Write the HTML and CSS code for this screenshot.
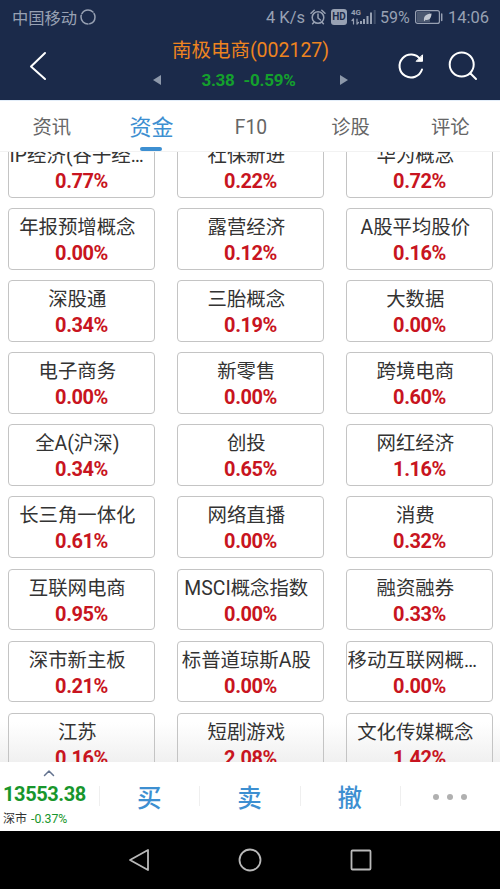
FILE: index.html
```html
<!DOCTYPE html>
<html lang="zh-CN">
<head>
    <meta charset="UTF-8">
    <meta name="viewport" content="width=device-width, initial-scale=1.0">
    <title>南极电商(002127)</title>
    <link rel="stylesheet" href="styles.css">
</head>

<body>
    <header class="header">
        <div class="status-bar">
            <span class="carrier">中国移动</span>
            <svg class="ring" width="16" height="16" viewBox="0 0 16 16">
                <circle cx="8" cy="8" r="7" pathLength="60" stroke-dasharray="17.5 2.5" stroke-dashoffset="5"/>
            </svg>
            <span class="speed">4 K/s</span>
            <svg class="alarm" width="16" height="16" viewBox="0 0 16 16">
                <circle cx="8" cy="8.5" r="5.8"/>
                <path d="M8 5v4l2.5 2M1 4.2L4.2 1.3M15 4.2L11.8 1.3M4 13.2l-1.4 1.6M12 13.2l1.4 1.6"/>
            </svg>
            <span class="hd">HD</span>
            <span class="network">
                <small>4G</small>
                <svg width="26" height="16" viewBox="0 0 26 16">
                    <path class="arrows" d="M2.5 10v5M1 11.5L2.5 10M6 10v5M7.5 13.5L6 15"/>
                    <path class="bars" d="M10 12v3M13 10v5M16.5 7v8M20 3.5V15"/>
                    <path class="bars weak" d="M23.7 1v14"/>
                </svg>
            </span>
            <span class="percent">59%</span>
            <svg class="battery" width="28" height="14" viewBox="0 0 28 14">
                <rect class="level" x="2" y="2" width="13" height="10"/>
                <rect class="shell" x="0.6" y="0.6" width="23.8" height="12.8" rx="2"/>
                <path class="leaf" d="M9 11c-.5-4.500 1.500-7 7.500-7.500C16.500 8 14 10.800 10.500 9.700L9.500 11.200z"/>
                <path class="cap" d="M26.700 4v6.500"/>
            </svg>
            <span class="time">14:06</span>
        </div>

        <div class="title-bar">
            <svg class="back" width="18" height="30" viewBox="0 0 18 30">
                <path d="M16 2L2 15.500L16 28"/>
            </svg>
            <div class="stock">
                <h1>南极电商(002127)</h1>
                <div class="quote">
                    <svg width="9" height="10" viewBox="0 0 9 10"><path d="M0 5L8 0V10z"/></svg>
                    <p><span>3.38</span><span>-0.59%</span></p>
                    <svg width="9" height="10" viewBox="0 0 9 10"><path d="M9 5L1 0V10z"/></svg>
                </div>
            </div>
            <svg class="refresh" width="28" height="28" viewBox="0 0 28 28">
                <path d="M25 17.500A11.500 11.500 0 1 1 23.500 7.500"/>
                <path class="tip" d="M25.500 3.200V9.300H19.500z"/>
            </svg>
            <svg class="search" width="30" height="30" viewBox="0 0 30 30">
                <circle cx="13.700" cy="13.500" r="12"/>
                <path d="M22.500 22.500L28 28"/>
            </svg>
        </div>
    </header>

    <nav class="tabs">
        <a>资讯</a>
        <a class="active">资金</a>
        <a>F10</a>
        <a>诊股</a>
        <a>评论</a>
    </nav>

    <main class="list">
        <div class="grid">
            <div class="card"><h2>IP经济(谷子经济)</h2><p>0.77%</p></div>
            <div class="card"><h2>社保新进</h2><p>0.22%</p></div>
            <div class="card"><h2>华为概念</h2><p>0.72%</p></div>

            <div class="card"><h2>年报预增概念</h2><p>0.00%</p></div>
            <div class="card"><h2>露营经济</h2><p>0.12%</p></div>
            <div class="card"><h2>A股平均股价</h2><p>0.16%</p></div>

            <div class="card"><h2>深股通</h2><p>0.34%</p></div>
            <div class="card"><h2>三胎概念</h2><p>0.19%</p></div>
            <div class="card"><h2>大数据</h2><p>0.00%</p></div>

            <div class="card"><h2>电子商务</h2><p>0.00%</p></div>
            <div class="card"><h2>新零售</h2><p>0.00%</p></div>
            <div class="card"><h2>跨境电商</h2><p>0.60%</p></div>

            <div class="card"><h2>全A(沪深)</h2><p>0.34%</p></div>
            <div class="card"><h2>创投</h2><p>0.65%</p></div>
            <div class="card"><h2>网红经济</h2><p>1.16%</p></div>

            <div class="card"><h2>长三角一体化</h2><p>0.61%</p></div>
            <div class="card"><h2>网络直播</h2><p>0.00%</p></div>
            <div class="card"><h2>消费</h2><p>0.32%</p></div>

            <div class="card"><h2>互联网电商</h2><p>0.95%</p></div>
            <div class="card"><h2>MSCI概念指数</h2><p>0.00%</p></div>
            <div class="card"><h2>融资融券</h2><p>0.33%</p></div>

            <div class="card"><h2>深市新主板</h2><p>0.21%</p></div>
            <div class="card"><h2>标普道琼斯A股</h2><p>0.00%</p></div>
            <div class="card"><h2>移动互联网概念</h2><p>0.00%</p></div>

            <div class="card"><h2>江苏</h2><p>0.16%</p></div>
            <div class="card"><h2>短剧游戏</h2><p>2.08%</p></div>
            <div class="card"><h2>文化传媒概念</h2><p>1.42%</p></div>
        </div>
    </main>

    <footer class="trade-bar">
        <div class="index">
            <svg width="12" height="8" viewBox="0 0 12 8"><path d="M1.500 6.500L6 2L10.500 6.500"/></svg>
            <strong>13553.38</strong>
            <p>深市 <span>-0.37%</span></p>
        </div>
        <a>买</a>
        <a>卖</a>
        <a>撤</a>
        <a class="more"><i></i><i></i><i></i></a>
    </footer>

    <div class="system-nav">
        <svg width="22" height="24" viewBox="0 0 22 24"><path d="M20 2V22L2 12z"/></svg>
        <svg width="24" height="24" viewBox="0 0 24 24"><circle cx="12" cy="12" r="10.500"/></svg>
        <svg width="22" height="22" viewBox="0 0 22 22"><rect x="1.500" y="1.500" width="19" height="19" rx="1"/></svg>
    </div>
</body>
</html>
```
FILE: styles.css
```css
* {
    box-sizing: border-box;
}

body {
    margin: 0;
    height: 889px;
    display: flex;
    flex-direction: column;
    overflow: hidden;
    background: #fff;
    font-family: Roboto, "Noto Sans CJK SC", sans-serif;
}

h1, h2, p {
    margin: 0;
    font-weight: normal;
}

svg {
    display: block;
    flex: none;
    fill: none;
    stroke-linecap: round;
    stroke-linejoin: round;
}

/* header */
.header {
    height: 100px;
    flex: none;
    background: #1b2a4a;
}

.status-bar {
    height: 34px;
    padding: 0 11px 0 12px;
    display: flex;
    align-items: center;
    color: #98a1b3;
    font-size: 16.5px;
    white-space: nowrap;
}

.status-bar svg {
    stroke: #98a1b3;
    stroke-width: 1.5;
}

.carrier {
    width: 68px;
    font-size: 16.3px;
}

.ring {
    margin-right: auto;
}

.speed {
    width: 44px;
}

.hd {
    width: 16px;
    height: 16px;
    margin: 0 4px 0 5px;
    border-radius: 3px;
    background: #98a1b3;
    color: #1b2a4a;
    font-size: 10px;
    font-weight: bold;
    line-height: 16px;
    text-align: center;
}

.network {
    position: relative;
    margin-right: 3px;
}

.network small {
    position: absolute;
    left: 0;
    top: 0;
    font-size: 8px;
    font-weight: bold;
    line-height: 8px;
}

.network .arrows {
    stroke-width: 1.2;
}

.network .bars {
    stroke-width: 2;
    stroke-linecap: butt;
}

.network .weak {
    opacity: 0.3;
}

.percent {
    width: 35px;
    font-size: 16px;
}

.battery {
    margin-right: 5px;
}

.status-bar .level {
    fill: #4c5971;
    stroke: none;
}

.status-bar .shell {
    stroke-width: 1.2;
}

.status-bar .leaf {
    fill: #c3c9d3;
    stroke: none;
}

.title-bar {
    height: 64px;
    padding: 0 22px 0 29px;
    display: flex;
    align-items: center;
}

.title-bar > svg {
    stroke: #fff;
    stroke-width: 2;
}

.stock {
    width: 198px;
    margin: -3px 49px 0 106px;
}

.stock h1 {
    color: #ee8420;
    font-size: 19.5px;
    line-height: 31px;
    text-align: center;
    white-space: nowrap;
}

.quote {
    height: 28px;
    display: flex;
    align-items: center;
    justify-content: space-between;
}

.quote svg {
    fill: #8d98aa;
}

.quote p {
    display: flex;
    gap: 9px;
    margin-right: 4px;
    color: #14a02d;
    font-size: 17px;
    font-weight: bold;
    letter-spacing: -0.25px;
}

.title-bar .tip {
    fill: #fff;
    stroke-width: 1;
}

.search {
    margin-left: 23px;
}

/* tabs */
.tabs {
    height: 52px;
    flex: none;
    display: flex;
    padding-left: 2px;
    border-top: 1px solid #e2edf9;
    border-bottom: 1px solid #f2f2f2;
}

.tabs a {
    position: relative;
    flex: 1;
    color: #666;
    font-size: 19.3px;
    line-height: 53px;
    text-align: center;
}

.tabs .active {
    color: #3d8fd1;
    font-size: 22px;
}

.tabs .active::after {
    content: "";
    position: absolute;
    left: 50%;
    bottom: 0;
    width: 22px;
    height: 4px;
    margin-left: -11px;
    border-radius: 2px;
    background: #3d8fd1;
}

/* sector cards, scrolled a little under the tabs */
.list {
    height: 610px;
    flex: none;
    overflow: hidden;
    background: linear-gradient(#fff 570px, #f0f0f0);
}

.grid {
    margin-top: -16.2px;
    padding: 0 7px 0 8px;
    display: grid;
    grid-template-columns: repeat(3, 1fr);
    grid-auto-rows: 61.7px;
    gap: 10.45px 22px;
}

.card {
    min-width: 0;
    padding-top: 6px;
    border: 1px solid #c4c4c4;
    border-radius: 4px;
    text-align: center;
}

.card h2 {
    margin: 0 9px 0 0.6px;
    overflow: hidden;
    color: #333;
    font-size: 19.4px;
    line-height: 26px;
    text-overflow: ellipsis;
    white-space: nowrap;
}

.card p {
    color: #c81420;
    font-size: 20px;
    font-weight: bold;
    letter-spacing: -0.45px;
    line-height: 25px;
}

/* bottom bar */
.trade-bar {
    height: 69px;
    flex: none;
    display: flex;
    background: #fff;
}

.trade-bar > a {
    flex: 1;
    display: flex;
    align-items: center;
    justify-content: center;
    color: #3d8fd1;
    font-size: 24.5px;
    font-weight: 500;
    background: linear-gradient(#efefef, #efefef) no-repeat 0 24px / 1px 20px;
}

.index {
    width: 99px;
    padding: 7px 0 0 3px;
}

.index svg {
    margin-left: 40px;
    stroke: #63738f;
    stroke-width: 1.5;
}

.index strong {
    display: block;
    color: #18962c;
    font-size: 20px;
    letter-spacing: -0.4px;
    line-height: 35px;
}

.index p {
    color: #333;
    font-size: 12px;
    line-height: 14px;
}

.index span {
    margin-left: 1px;
    color: #18962c;
    font-size: 12.3px;
}

.trade-bar .more {
    gap: 8px;
}

.more i {
    width: 6px;
    height: 6px;
    border-radius: 50%;
    background: #b0b0b0;
}

/* android buttons */
.system-nav {
    height: 58px;
    flex: none;
    display: flex;
    align-items: center;
    justify-content: center;
    gap: 88px;
    background: #000;
}

.system-nav svg {
    stroke: #b9b9b9;
    stroke-width: 1.8;
}
```
